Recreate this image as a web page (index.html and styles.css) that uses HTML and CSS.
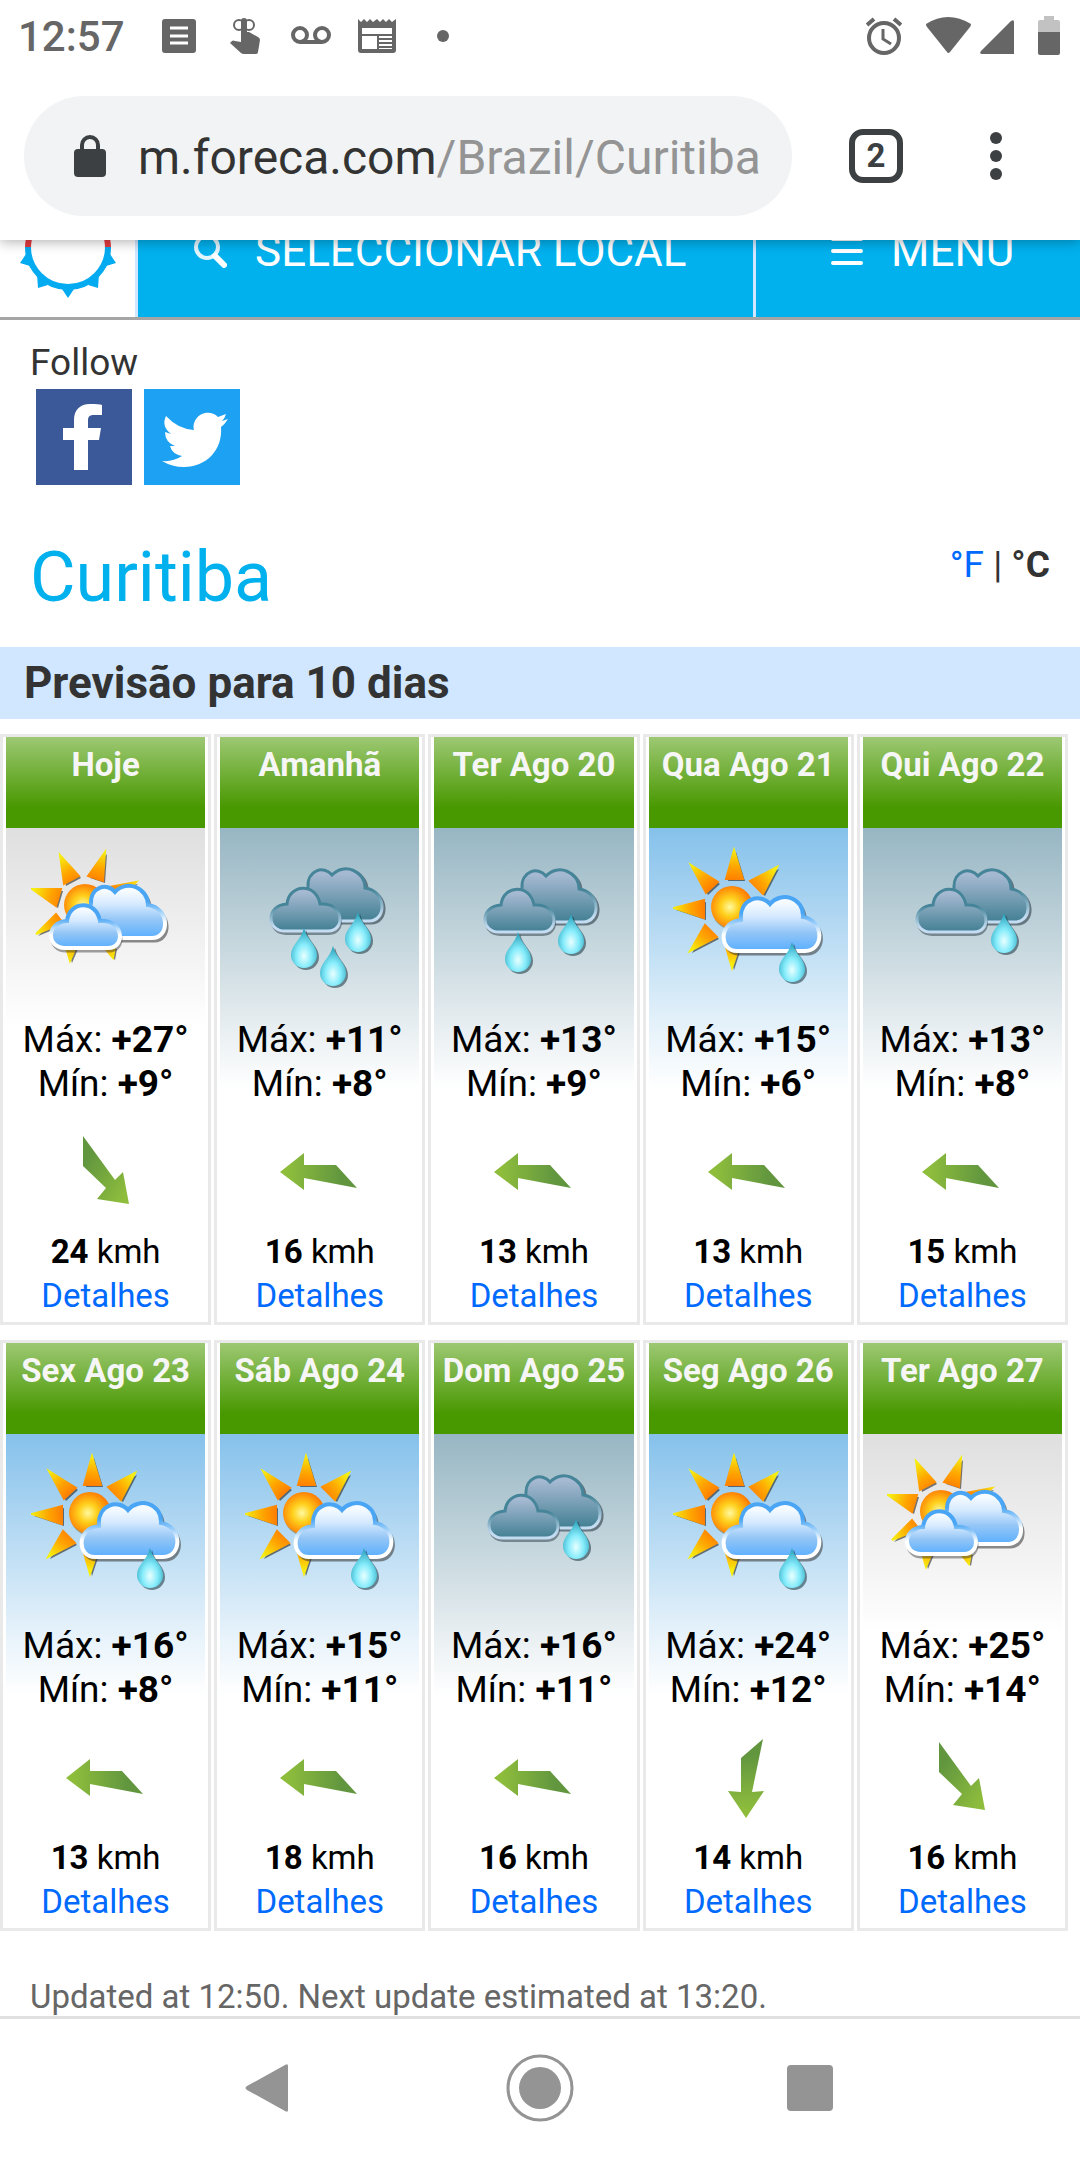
FILE: index.html
```html
<!DOCTYPE html>
<html lang="pt">
<head>
    <meta charset="UTF-8">
    <meta name="viewport" content="width=device-width, initial-scale=1.0">
    <title>Curitiba - Foreca</title>
    <link rel="stylesheet" href="styles.css">
</head>
<body>

    <!-- Shared shapes for the weather and wind icons -->
    <svg class="defs" aria-hidden="true">
        <defs>
            <radialGradient id="sun-fill" cx="0.45" cy="0.5" r="0.55">
                <stop offset="0" stop-color="#fff9a0"/>
                <stop offset="0.4" stop-color="#ffd01c"/>
                <stop offset="1" stop-color="#ff7400"/>
            </radialGradient>
            <radialGradient id="ray-fill" gradientUnits="userSpaceOnUse" cx="58" cy="60" r="58">
                <stop offset="0.45" stop-color="#ff7c00"/>
                <stop offset="0.7" stop-color="#ffa600"/>
                <stop offset="1" stop-color="#f6ee10"/>
            </radialGradient>
            <linearGradient id="light-fill" x1="0" y1="0" x2="0" y2="1">
                <stop offset="0.1" stop-color="#f6fbff"/>
                <stop offset="0.35" stop-color="#d6eaff"/>
                <stop offset="0.65" stop-color="#94c6f6"/>
                <stop offset="1" stop-color="#5aaeff"/>
            </linearGradient>
            <linearGradient id="light-line" x1="0" y1="0" x2="0" y2="1">
                <stop offset="0.3" stop-color="#4aa6f5"/>
                <stop offset="0.7" stop-color="#ffffff"/>
            </linearGradient>
            <linearGradient id="dark-fill" x1="0" y1="0" x2="0" y2="1">
                <stop offset="0.1" stop-color="#a5b9d2"/>
                <stop offset="0.5" stop-color="#7aa0b6"/>
                <stop offset="1" stop-color="#427f93"/>
            </linearGradient>
            <linearGradient id="dark-line" x1="0" y1="0" x2="0" y2="1">
                <stop offset="0.4" stop-color="#468599"/>
                <stop offset="0.9" stop-color="#c4dcf2"/>
            </linearGradient>
            <radialGradient id="drop-fill" cx="0.5" cy="0.7" r="0.65">
                <stop offset="0" stop-color="#e8ffff"/>
                <stop offset="0.45" stop-color="#86ecfb"/>
                <stop offset="1" stop-color="#2ba3bd"/>
            </radialGradient>
            <linearGradient id="wind-w" x1="0" y1="0" x2="1" y2="0">
                <stop offset="0.1" stop-color="#8ebd3c"/>
                <stop offset="0.8" stop-color="#61963f"/>
            </linearGradient>
            <linearGradient id="wind-s" x1="0" y1="1" x2="0" y2="0">
                <stop offset="0.1" stop-color="#8ebd3c"/>
                <stop offset="0.8" stop-color="#61963f"/>
            </linearGradient>
            <linearGradient id="wind-se" x1="1" y1="1" x2="0" y2="0">
                <stop offset="0.1" stop-color="#8ebd3c"/>
                <stop offset="0.8" stop-color="#61963f"/>
            </linearGradient>

            <path id="rays-behind" d="M29 8L33 37L48 29ZM74 5L57 29L72 34ZM105 35L78 40L93 46ZM1 42L30 42L25 59ZM5 87L25 67L32 76ZM39 114L35 100L45 100ZM82 111L73 100L84 100Z"/>
            <path id="rays-open" d="M61 3L53 32L70 32ZM104 20L77 34L90 47ZM18 18L45 35L33 46ZM1 61L31 53L31 71ZM17 104L32 78L44 90ZM59 121L53 100L66 100Z"/>
            <path id="cloud-back" d="M70 91C60 84 54 66 60 57C59 40 76 35 84 45C96 32 117 41 117 58C139 61 139 91 121 91Z"/>
            <path id="cloud-front" d="M34 101C15 101 15 75 36 74C38 54 65 52 69 74C93 72 95 101 77 101Z"/>
            <path id="cloud-one" d="M64 104C46 104 45 75 68 73C66 51 88 46 97 57C108 44 131 50 130 70C152 74 151 104 132 104Z"/>
            <path id="drop-shape" d="M0-26C3-14 13-9 13 1A13 13 0 0 1-13 1C-13-9-3-14 0-26Z"/>

            <g id="drop">
                <use href="#drop-shape" x="2" y="2" fill="#12323c" opacity="0.55"/>
                <use href="#drop-shape" fill="url(#drop-fill)"/>
            </g>
            <g id="clouds-light">
                <use href="#cloud-back" x="2" y="3" fill="#333333" stroke="#333333" stroke-width="3" opacity="0.55"/>
                <use href="#cloud-back" fill="url(#light-fill)" stroke="url(#light-line)" stroke-width="4"/>
                <use href="#cloud-front" x="1" y="3" fill="#333333" stroke="#333333" stroke-width="3" opacity="0.45"/>
                <use href="#cloud-front" fill="url(#light-fill)" stroke="url(#light-line)" stroke-width="4"/>
            </g>
            <g id="clouds-dark">
                <use href="#cloud-back" x="-1" y="2" fill="#2d3c46" stroke="#2d3c46" stroke-width="3" opacity="0.6"/>
                <use href="#cloud-back" x="-3" fill="url(#dark-fill)" stroke="url(#dark-line)" stroke-width="3"/>
                <use href="#cloud-front" x="1" y="3" fill="#2d3c46" stroke="#2d3c46" stroke-width="2" opacity="0.5"/>
                <use href="#cloud-front" fill="url(#dark-fill)" stroke="url(#dark-line)" stroke-width="3"/>
            </g>

            <symbol id="partly-cloudy" viewBox="0 0 150 150">
                <use href="#rays-behind" x="2" y="2" fill="#222222" opacity="0.6"/>
                <use href="#rays-behind" fill="url(#ray-fill)" stroke="url(#ray-fill)" stroke-width="2"/>
                <circle cx="54" cy="58" r="21" fill="url(#sun-fill)"/>
                <use href="#clouds-light"/>
            </symbol>
            <symbol id="sun-shower" viewBox="0 0 150 150">
                <use href="#rays-open" x="2" y="2" fill="#222222" opacity="0.6"/>
                <use href="#rays-open" fill="url(#ray-fill)" stroke="url(#ray-fill)" stroke-width="2"/>
                <circle cx="60" cy="62" r="21" fill="#7a5a10" opacity="0.5"/>
                <circle cx="59" cy="60" r="21" fill="url(#sun-fill)"/>
                <use href="#cloud-one" x="2" y="3" fill="#333333" stroke="#333333" stroke-width="3" opacity="0.55"/>
                <use href="#cloud-one" fill="url(#light-fill)" stroke="url(#light-line)" stroke-width="4"/>
                <use href="#drop" x="119" y="121"/>
            </symbol>
            <symbol id="rain-1" viewBox="0 0 150 150">
                <use href="#clouds-dark" x="10" y="-16"/>
                <use href="#drop" x="117" y="92"/>
            </symbol>
            <symbol id="rain-2" viewBox="0 0 150 150">
                <use href="#clouds-dark" x="6" y="-16"/>
                <use href="#drop" x="59" y="111"/>
                <use href="#drop" x="112" y="93"/>
            </symbol>
            <symbol id="rain-3" viewBox="0 0 150 150">
                <use href="#clouds-dark" x="6" y="-17"/>
                <use href="#drop" x="59" y="107"/>
                <use href="#drop" x="88" y="125"/>
                <use href="#drop" x="113" y="91"/>
            </symbol>

            <symbol id="arrow-w" viewBox="0 0 80 80">
                <path d="M0 40L24 21L24 33L56 33L77 56L24 46L24 58Z" fill="url(#wind-w)"/>
            </symbol>
            <symbol id="arrow-s" viewBox="0 0 80 80">
                <path d="M55 1L33 20L33 54L20 53L38 80L56 53L44 54Z" fill="url(#wind-s)"/>
            </symbol>
            <symbol id="arrow-se" viewBox="0 0 80 80">
                <path d="M17 4L17 34L40 56L31 67L63 72L57 40L49 48Z" fill="url(#wind-se)"/>
            </symbol>
        </defs>
    </svg>

    <div class="status-bar">
        <span class="clock">12:57</span>
        <div class="notifications">
            <svg width="40" height="40" viewBox="0 0 40 40">
                <rect x="3" y="3" width="34" height="34" rx="3" fill="#666666"/>
                <path d="M11 12H29M11 20H29M11 27H29" stroke="#ffffff" stroke-width="3"/>
            </svg>
            <svg width="40" height="40" viewBox="0 0 40 40">
                <circle cx="14" cy="9" r="5" fill="none" stroke="#666666" stroke-width="2"/>
                <circle cx="24" cy="9" r="5" fill="none" stroke="#666666" stroke-width="2"/>
                <path d="M16 5Q16 2 19 2Q22 2 22 5V16H24L33 21Q35 22 35 24L33 36Q33 38 31 38H19Q17 38 16 37L5 27L7 25Q8 24 10 25L16 26Z" fill="#666666"/>
            </svg>
            <svg width="40" height="40" viewBox="0 0 40 40">
                <g fill="none" stroke="#666666" stroke-width="4">
                    <circle cx="9" cy="19" r="7"/>
                    <circle cx="31" cy="19" r="7"/>
                    <path d="M9 26H31"/>
                </g>
            </svg>
            <svg width="40" height="40" viewBox="0 0 40 40">
                <path d="M1 3L4 6L7 3L10 6L13 3L16 6L20 3L23 6L26 3L29 6L32 3L35 6L39 3V34Q39 37 36 37H4Q1 37 1 34Z" fill="#666666"/>
                <path d="M5 12H35V18H5ZM5 20H20V33H5ZM22 20H35V22H22ZM22 24H35V26H22ZM22 28H35V30H22ZM22 32H35V33H22Z" fill="#ffffff"/>
            </svg>
            <svg width="40" height="40" viewBox="0 0 40 40">
                <circle cx="20" cy="20" r="6" fill="#666666"/>
            </svg>
        </div>
        <div class="system-icons">
            <svg width="36" height="40" viewBox="0 0 36 40">
                <g fill="none" stroke="#666666">
                    <circle cx="18" cy="22" r="15" stroke-width="4"/>
                    <path d="M17 13V23L25 28" stroke-width="3"/>
                    <path d="M1 9L8 3M35 9L28 3" stroke-width="4"/>
                </g>
            </svg>
            <svg width="45" height="40" viewBox="0 0 45 40">
                <path d="M0 8Q22-6 45 8Q45 10 44 11L24 36Q22 38 21 36L1 11Q0 10 0 8Z" fill="#666666"/>
            </svg>
            <svg class="signal" width="34" height="40" viewBox="0 0 34 40">
                <path d="M31 5Q34 3 34 6V38H2Q-1 38 1 35Z" fill="#666666"/>
            </svg>
            <svg width="22" height="40" viewBox="0 0 22 40">
                <path d="M6 0H16V4H20Q22 4 22 6V17H0V6Q0 4 2 4H6Z" fill="#c2c2c2"/>
                <path d="M0 16H22V37Q22 39 20 39H2Q0 39 0 37Z" fill="#666666"/>
            </svg>
        </div>
    </div>

    <div class="toolbar">
        <button class="address" type="button">
            <svg width="32" height="42" viewBox="0 0 32 42">
                <rect x="0" y="14" width="32" height="28" rx="4" fill="#3c4043"/>
                <path d="M8 16V10A8 8 0 0 1 24 10V16" fill="none" stroke="#3c4043" stroke-width="4"/>
            </svg>
            <span class="url">m.foreca.com<span class="path">/Brazil/Curitiba</span></span>
        </button>
        <button class="tabs" type="button" aria-label="Tabs">2</button>
        <button class="more" type="button" aria-label="More">
            <svg width="12" height="48" viewBox="0 0 12 48">
                <g fill="#3c4043">
                    <circle cx="6" cy="6" r="6"/>
                    <circle cx="6" cy="24" r="6"/>
                    <circle cx="6" cy="42" r="6"/>
                </g>
            </svg>
        </button>
    </div>

    <main class="page">
        <header class="site-header">
            <a class="logo" href="#" aria-label="Foreca">
                <svg width="96" height="104" viewBox="0 0 96 104">
                    <path d="M8 52A40 40 0 0 1 88 52" fill="none" stroke="#e63a3e" stroke-width="6"/>
                    <path d="M8 51A40 40 0 0 0 88 51" fill="none" stroke="#05abf0" stroke-width="6"/>
                    <path d="M6 58L0 67L10 70L12 68ZM90 58L96 67L86 70L84 68ZM17 78L18 92L28 89ZM79 78L78 92L68 89ZM42 93L48 102L54 93Z" fill="#05abf0"/>
                </svg>
            </a>
            <a class="header-link search" href="#">
                <svg width="34" height="34" viewBox="0 0 34 34">
                    <circle cx="14" cy="13" r="11" fill="none" stroke="#e2f5fd" stroke-width="4"/>
                    <path d="M22 22L31 31" stroke="#ffffff" stroke-width="6" stroke-linecap="round"/>
                </svg>
                SELECCIONAR LOCAL
            </a>
            <a class="header-link menu" href="#">
                <svg width="32" height="34" viewBox="0 0 32 34">
                    <path d="M2 5H30M2 17H30M2 29H30" stroke="#ffffff" stroke-width="4" stroke-linecap="round"/>
                </svg>
                MENU
            </a>
        </header>

        <section class="follow">
            <span>Follow</span>
            <div class="social">
                <a href="#" aria-label="Facebook">
                    <svg width="96" height="96" viewBox="0 0 96 96">
                        <rect width="96" height="96" fill="#3b5998"/>
                        <path d="M38 81V51H27V39H38V31C38 21 44 15 54 15C60 15 64 15 66 16V26H58C53 26 52 28 52 32V39H65L63 51H52V81Z" fill="#ffffff"/>
                    </svg>
                </a>
                <a href="#" aria-label="Twitter">
                    <svg width="96" height="96" viewBox="0 0 96 96">
                        <rect width="96" height="96" fill="#1da1f2"/>
                        <path d="M84 30Q81 35 77 38C79 61 62 78 40 78Q28 78 18 72Q29 73 38 67Q28 65 26 57H31Q21 53 21 43L27 45Q17 37 22 27Q34 40 50 41C47 27 64 18 74 28L82 25Q81 29 78 32Z" fill="#ffffff"/>
                    </svg>
                </a>
            </div>
        </section>

        <div class="title-row">
            <h1>Curitiba</h1>
            <p class="units"><a href="#">°F</a> | <strong>°C</strong></p>
        </div>

        <h2>Previsão para 10 dias</h2>

        <div class="forecast">
            <article class="day">
                <h3>Hoje</h3>
                <div class="weather clear">
                    <svg class="symbol"><use href="#partly-cloudy"/></svg>
                    <p>Máx: <strong>+27°</strong></p>
                    <p>Mín: <strong>+9°</strong></p>
                </div>
                <svg class="wind"><use href="#arrow-se"/></svg>
                <p class="speed"><strong>24</strong> kmh</p>
                <a href="#">Detalhes</a>
            </article>
            <article class="day">
                <h3>Amanhã</h3>
                <div class="weather rain">
                    <svg class="symbol"><use href="#rain-3"/></svg>
                    <p>Máx: <strong>+11°</strong></p>
                    <p>Mín: <strong>+8°</strong></p>
                </div>
                <svg class="wind"><use href="#arrow-w"/></svg>
                <p class="speed"><strong>16</strong> kmh</p>
                <a href="#">Detalhes</a>
            </article>
            <article class="day">
                <h3>Ter Ago 20</h3>
                <div class="weather rain">
                    <svg class="symbol"><use href="#rain-2"/></svg>
                    <p>Máx: <strong>+13°</strong></p>
                    <p>Mín: <strong>+9°</strong></p>
                </div>
                <svg class="wind"><use href="#arrow-w"/></svg>
                <p class="speed"><strong>13</strong> kmh</p>
                <a href="#">Detalhes</a>
            </article>
            <article class="day">
                <h3>Qua Ago 21</h3>
                <div class="weather shower">
                    <svg class="symbol"><use href="#sun-shower"/></svg>
                    <p>Máx: <strong>+15°</strong></p>
                    <p>Mín: <strong>+6°</strong></p>
                </div>
                <svg class="wind"><use href="#arrow-w"/></svg>
                <p class="speed"><strong>13</strong> kmh</p>
                <a href="#">Detalhes</a>
            </article>
            <article class="day">
                <h3>Qui Ago 22</h3>
                <div class="weather rain">
                    <svg class="symbol"><use href="#rain-1"/></svg>
                    <p>Máx: <strong>+13°</strong></p>
                    <p>Mín: <strong>+8°</strong></p>
                </div>
                <svg class="wind"><use href="#arrow-w"/></svg>
                <p class="speed"><strong>15</strong> kmh</p>
                <a href="#">Detalhes</a>
            </article>
            <article class="day">
                <h3>Sex Ago 23</h3>
                <div class="weather shower">
                    <svg class="symbol"><use href="#sun-shower"/></svg>
                    <p>Máx: <strong>+16°</strong></p>
                    <p>Mín: <strong>+8°</strong></p>
                </div>
                <svg class="wind"><use href="#arrow-w"/></svg>
                <p class="speed"><strong>13</strong> kmh</p>
                <a href="#">Detalhes</a>
            </article>
            <article class="day">
                <h3>Sáb Ago 24</h3>
                <div class="weather shower">
                    <svg class="symbol"><use href="#sun-shower"/></svg>
                    <p>Máx: <strong>+15°</strong></p>
                    <p>Mín: <strong>+11°</strong></p>
                </div>
                <svg class="wind"><use href="#arrow-w"/></svg>
                <p class="speed"><strong>18</strong> kmh</p>
                <a href="#">Detalhes</a>
            </article>
            <article class="day">
                <h3>Dom Ago 25</h3>
                <div class="weather rain">
                    <svg class="symbol"><use href="#rain-1"/></svg>
                    <p>Máx: <strong>+16°</strong></p>
                    <p>Mín: <strong>+11°</strong></p>
                </div>
                <svg class="wind"><use href="#arrow-w"/></svg>
                <p class="speed"><strong>16</strong> kmh</p>
                <a href="#">Detalhes</a>
            </article>
            <article class="day">
                <h3>Seg Ago 26</h3>
                <div class="weather shower">
                    <svg class="symbol"><use href="#sun-shower"/></svg>
                    <p>Máx: <strong>+24°</strong></p>
                    <p>Mín: <strong>+12°</strong></p>
                </div>
                <svg class="wind"><use href="#arrow-s"/></svg>
                <p class="speed"><strong>14</strong> kmh</p>
                <a href="#">Detalhes</a>
            </article>
            <article class="day">
                <h3>Ter Ago 27</h3>
                <div class="weather clear">
                    <svg class="symbol"><use href="#partly-cloudy"/></svg>
                    <p>Máx: <strong>+25°</strong></p>
                    <p>Mín: <strong>+14°</strong></p>
                </div>
                <svg class="wind"><use href="#arrow-se"/></svg>
                <p class="speed"><strong>16</strong> kmh</p>
                <a href="#">Detalhes</a>
            </article>
        </div>

        <p class="updated">Updated at 12:50. Next update estimated at 13:20.</p>
    </main>

    <nav class="system-nav">
        <button type="button" aria-label="Back">
            <svg width="68" height="68" viewBox="0 0 68 68">
                <path d="M49 11Q52 9 52 12V56Q52 59 49 57L11 36Q8 34 11 32Z" fill="#949494"/>
            </svg>
        </button>
        <button type="button" aria-label="Home">
            <svg width="68" height="68" viewBox="0 0 68 68">
                <circle cx="34" cy="34" r="21" fill="#949494"/>
                <circle cx="34" cy="34" r="32" fill="none" stroke="#949494" stroke-width="3"/>
            </svg>
        </button>
        <button type="button" aria-label="Recent apps">
            <svg width="68" height="68" viewBox="0 0 68 68">
                <rect x="11" y="11" width="46" height="46" rx="4" fill="#949494"/>
            </svg>
        </button>
    </nav>

</body>
</html>
```

FILE: styles.css
```css
* {
    box-sizing: border-box;
}
body {
    margin: 0;
    height: 100vh;
    display: flex;
    flex-direction: column;
    font-family: Roboto, sans-serif;
    font-size: 37px;
    line-height: 44px;
    color: #333;
    background: #fff;
    overflow: hidden;
}
h1, h2, h3, p {
    margin: 0;
}
a {
    color: #006aff;
    text-decoration: none;
}
button {
    border: none;
    background: none;
    padding: 0;
    font-family: inherit;
    cursor: pointer;
}
svg {
    display: block;
    flex-shrink: 0;
}
.defs {
    position: absolute;
    width: 0;
    height: 0;
}

/* Android status bar */
.status-bar {
    display: flex;
    align-items: center;
    height: 72px;
    padding: 0 20px 0 18px;
    color: #666;
    flex-shrink: 0;
}
.clock {
    padding-top: 2px;
    font-size: 42px;
    font-weight: 500;
}
.notifications {
    display: flex;
    gap: 26px;
    margin-left: 34px;
}
.system-icons {
    display: flex;
    gap: 24px;
    margin-left: auto;
}
.signal {
    margin-left: -15px;
}

/* Browser toolbar */
.toolbar {
    display: flex;
    align-items: center;
    height: 168px;
    padding: 0 78px 0 24px;
    background: #fff;
    box-shadow: 0 2px 12px rgba(0, 0, 0, 0.3);
    clip-path: inset(0 0 -20px 0);
    position: relative;
    z-index: 2;
    flex-shrink: 0;
}
.address {
    display: flex;
    align-items: center;
    gap: 32px;
    flex: 1;
    height: 120px;
    padding: 0 0 0 50px;
    border-radius: 60px;
    background: #f1f3f4;
    font-size: 48px;
    color: #333;
}
.url {
    padding-top: 2px;
}
.path {
    color: #949494;
}
.tabs {
    width: 54px;
    height: 54px;
    margin: 0 87px 0 57px;
    border: 6px solid #3c4043;
    border-radius: 14px;
    color: #3c4043;
    font-size: 33px;
    font-weight: bold;
    line-height: 42px;
    flex-shrink: 0;
}

/* Page */
.page {
    flex: 1;
    min-height: 0;
    overflow: hidden;
}
.site-header {
    display: flex;
    height: 141px;
    margin-top: -61px;
    border-bottom: 3px solid #a5a5a5;
}
.logo {
    display: flex;
    align-items: center;
    width: 138px;
    padding-left: 20px;
    border-right: 3px solid #d0e7ff;
}
.header-link {
    display: flex;
    align-items: center;
    padding-top: 5px;
    background: #00b1ee;
    color: #fff;
    font-size: 44px;
}
.search {
    flex: 1;
    gap: 28px;
    padding-left: 55px;
    border-right: 3px solid #d0e7ff;
}
.menu {
    width: 30%;
    gap: 28px;
    padding-left: 75px;
}
.follow {
    padding: 21px 30px 0;
}
.social {
    display: flex;
    gap: 12px;
    padding: 4px 6px 0;
}
.title-row {
    display: flex;
    justify-content: space-between;
    padding: 50px 30px 28px;
}
h1 {
    font-size: 70px;
    font-weight: normal;
    line-height: 84px;
    color: #00b1ee;
}
.units {
    padding-top: 8px;
}
h2 {
    padding-left: 24px;
    font-size: 44px;
    line-height: 72px;
    background: #d0e7ff;
}

/* Forecast */
.forecast {
    display: grid;
    grid-template-columns: repeat(5, 1fr);
    gap: 15px 3px;
    padding: 15px 12px 0 0;
}
.day {
    padding: 0 3px 4px;
    border: 3px solid #e9e9e9;
    color: #000;
    font-size: 33px;
    text-align: center;
}
h3 {
    height: 91px;
    padding-top: 6px;
    font-size: 33px;
    color: #f6f6f6;
    white-space: nowrap;
    background: linear-gradient(#9dc873, #489800 78%);
}
.weather {
    padding-top: 19px;
    font-size: 37px;
}
.clear {
    background: linear-gradient(#dfdfdf, #fff 72%);
}
.rain {
    background: linear-gradient(#97b6c3, #e6edf0 70%, #fff 94%);
}
.shower {
    background: linear-gradient(#85c1eb, #e4f1fa 70%, #fff 94%);
}
.symbol {
    width: 150px;
    height: 150px;
    margin: 0 auto 21px;
}
.wind {
    width: 80px;
    height: 80px;
    margin: 26px auto 18px;
}
.updated {
    padding: 44px 30px 0;
    font-size: 33px;
    color: #666;
}

/* Android navigation buttons */
.system-nav {
    display: flex;
    justify-content: center;
    align-items: center;
    gap: 202px;
    height: 144px;
    padding-bottom: 3px;
    border-top: 3px solid #e0e0e0;
    background: #fff;
    flex-shrink: 0;
}
```
